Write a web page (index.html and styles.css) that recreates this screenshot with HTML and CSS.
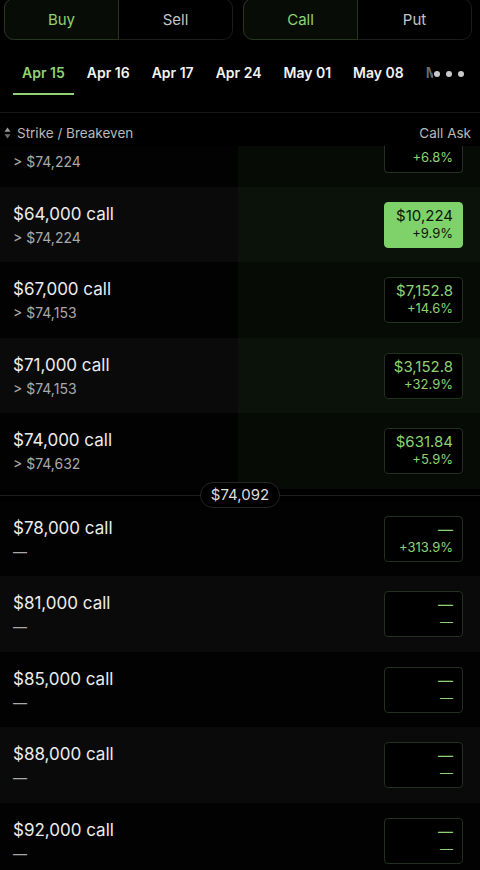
FILE: index.html
```html
<!DOCTYPE html>
<html lang="en">
<head>
    <meta charset="UTF-8">
    <meta name="viewport" content="width=device-width, initial-scale=1.0">
    <title>Options Chain</title>
    <link rel="stylesheet" href="styles.css">
</head>
<body>
    <div class="chain">
        <div class="toggles">
            <div class="toggle">
                <div class="seg active">Buy</div>
                <div class="seg">Sell</div>
            </div>
            <div class="toggle">
                <div class="seg active">Call</div>
                <div class="seg">Put</div>
            </div>
        </div>

        <div class="tabs-wrap">
            <div class="tabs">
                <div class="tab active">Apr 15</div>
                <div class="tab">Apr 16</div>
                <div class="tab">Apr 17</div>
                <div class="tab">Apr 24</div>
                <div class="tab">May 01</div>
                <div class="tab">May 08</div>
                <div class="tab faded">May 15</div>
            </div>
            <div class="more">
                <span class="dot"></span><span class="dot"></span><span class="dot"></span>
            </div>
        </div>

        <div class="header">
            <div class="sort">
                <svg width="7" height="12" viewBox="0 0 7 12">
                    <path d="M3.5 0.5 L6.5 4.8 L0.5 4.8 Z" fill="#9a9a9a"/>
                    <path d="M3.5 11.5 L6.5 7.2 L0.5 7.2 Z" fill="#6e6e6e"/>
                </svg>
                <span>Strike / Breakeven</span>
            </div>
            <span>Call Ask</span>
        </div>

        <div class="list">
            <!-- first row is scrolled half out of view -->
            <div class="row itm partial">
                <div class="info">
                    <div class="breakeven">&gt; $74,224</div>
                </div>
                <div class="ask"><div class="box"><div class="pct">+6.8%</div></div></div>
            </div>
            <div class="row itm alt">
                <div class="info">
                    <div class="strike">$64,000 call</div>
                    <div class="breakeven">&gt; $74,224</div>
                </div>
                <div class="ask"><div class="box selected"><div class="price">$10,224</div><div class="pct">+9.9%</div></div></div>
            </div>
            <div class="row itm">
                <div class="info">
                    <div class="strike">$67,000 call</div>
                    <div class="breakeven">&gt; $74,153</div>
                </div>
                <div class="ask"><div class="box"><div class="price">$7,152.8</div><div class="pct">+14.6%</div></div></div>
            </div>
            <div class="row itm alt">
                <div class="info">
                    <div class="strike">$71,000 call</div>
                    <div class="breakeven">&gt; $74,153</div>
                </div>
                <div class="ask"><div class="box"><div class="price">$3,152.8</div><div class="pct">+32.9%</div></div></div>
            </div>
            <div class="row itm">
                <div class="info">
                    <div class="strike">$74,000 call</div>
                    <div class="breakeven">&gt; $74,632</div>
                </div>
                <div class="ask"><div class="box"><div class="price">$631.84</div><div class="pct">+5.9%</div></div></div>
            </div>

            <div class="spot">
                <span class="spot-pill">$74,092</span>
            </div>

            <div class="row">
                <div class="info">
                    <div class="strike">$78,000 call</div>
                    <div class="breakeven">—</div>
                </div>
                <div class="ask"><div class="box"><div class="price">—</div><div class="pct">+313.9%</div></div></div>
            </div>
            <div class="row alt">
                <div class="info">
                    <div class="strike">$81,000 call</div>
                    <div class="breakeven">—</div>
                </div>
                <div class="ask"><div class="box"><div class="price">—</div><div class="pct">—</div></div></div>
            </div>
            <div class="row">
                <div class="info">
                    <div class="strike">$85,000 call</div>
                    <div class="breakeven">—</div>
                </div>
                <div class="ask"><div class="box"><div class="price">—</div><div class="pct">—</div></div></div>
            </div>
            <div class="row alt">
                <div class="info">
                    <div class="strike">$88,000 call</div>
                    <div class="breakeven">—</div>
                </div>
                <div class="ask"><div class="box"><div class="price">—</div><div class="pct">—</div></div></div>
            </div>
            <div class="row">
                <div class="info">
                    <div class="strike">$92,000 call</div>
                    <div class="breakeven">—</div>
                </div>
                <div class="ask"><div class="box"><div class="price">—</div><div class="pct">—</div></div></div>
            </div>
        </div>
    </div>
</body>
</html>
```

FILE: styles.css
```css
body {
    margin: 0;
    background-color: #000;
    font-family: Inter, "Noto Sans", sans-serif;
    color: #e8e8e8;
    overflow: hidden;
}
.chain {
    height: 870px;
    display: flex;
    flex-direction: column;
}

/* Buy / Sell and Call / Put switches */
.toggles {
    display: flex;
    gap: 10px;
    margin: -2px 8px 0 4px;
}
.toggle {
    flex: 1;
    display: flex;
    height: 42px;
    border: 1px solid #1c1c1c;
    border-radius: 10px;
    box-sizing: border-box;
}
.toggle .seg {
    flex: 1;
    display: flex;
    justify-content: center;
    align-items: center;
    font-size: 15px;
    color: #c4c4c4;
}
.toggle .seg.active {
    margin: -1px 0 -1px -1px;
    border: 1px solid #26361f;
    border-radius: 10px 0 0 10px;
    background-color: #080c07;
    color: #8fd273;
}

/* expiry tabs */
.tabs-wrap {
    position: relative;
    margin-top: 16px;
    border-bottom: 1px solid #161616;
    padding-bottom: 17px;
    overflow: hidden;
}
.tabs {
    display: flex;
    gap: 4px;
    padding-left: 13px;
    white-space: nowrap;
}
.tab {
    padding: 0 9px 3px;
    line-height: 34px;
    font-size: 14px;
    font-weight: 600;
    color: #f2f2f2;
    border-bottom: 2.5px solid transparent;
}
.tab.active {
    color: #8fd273;
    border-bottom-color: #8fd273;
}
.tab.faded {
    color: #6c6c6c;
}
.more {
    position: absolute;
    top: 0;
    left: 433px;
    right: 0;
    height: 36px;
    display: flex;
    align-items: center;
    gap: 6px;
    padding-left: 1px;
    background-color: #000;
}
.more .dot {
    width: 6px;
    height: 6px;
    border-radius: 50%;
    background-color: #c9c9c9;
}

/* column header */
.header {
    display: flex;
    justify-content: space-between;
    align-items: center;
    padding: 11px 9px 4px 4px;
    font-size: 13.5px;
    line-height: 18px;
    color: #b9b9b9;
}
.sort {
    display: flex;
    align-items: center;
    gap: 6px;
}
.sort svg {
    display: block;
}

/* strike rows */
.list {
    flex: 1;
    overflow: hidden;
}
.row {
    display: grid;
    grid-template-columns: 238px 1fr;
    height: 75.5px;
    background-color: #020202;
}
.row.alt {
    background-color: #0a0a0a;
}
.row.itm .ask {
    background-color: #060c05;
}
.row.itm.alt .ask {
    background-color: #0b1209;
}
.info {
    padding: 15px 0 0 13px;
}
.strike {
    font-size: 17px;
    line-height: 24px;
    color: #ececec;
}
.breakeven {
    margin-top: 3px;
    font-size: 14px;
    line-height: 18px;
    color: #a9a9a9;
}
.ask {
    display: flex;
    justify-content: flex-end;
    padding: 15px 17px 0 0;
}
.box {
    width: 79px;
    height: 46px;
    box-sizing: border-box;
    border: 1px solid #223020;
    border-radius: 4px;
    background-color: #000;
    padding: 4px 9px 0 0;
    text-align: right;
    color: #8fd273;
}
.box .price {
    font-size: 15px;
    line-height: 18px;
}
.box .pct {
    font-size: 13px;
    line-height: 17px;
}
.box.selected {
    background-color: #7fd16a;
    border-color: #7fd16a;
    color: #0b160a;
}

/* row cut by the header */
.row.partial {
    height: 40.5px;
}
.row.partial .info {
    padding-top: 7px;
}
.row.partial .breakeven {
    margin-top: 0;
}
.row.partial .ask {
    padding-top: 0;
}
.row.partial .box {
    height: 27px;
    border-top: none;
    border-radius: 0 0 4px 4px;
    padding-top: 3px;
}

/* spot price divider */
.spot {
    height: 12px;
    position: relative;
    display: flex;
    justify-content: center;
    align-items: center;
}
.spot::before {
    content: "";
    position: absolute;
    left: 0;
    right: 0;
    top: 6px;
    height: 1px;
    background-color: #1e1e1e;
}
.spot-pill {
    position: relative;
    padding: 0 10px;
    line-height: 24px;
    border: 1px solid #242424;
    border-radius: 13px;
    background-color: #000;
    font-size: 15px;
    color: #dcdcdc;
}
```
